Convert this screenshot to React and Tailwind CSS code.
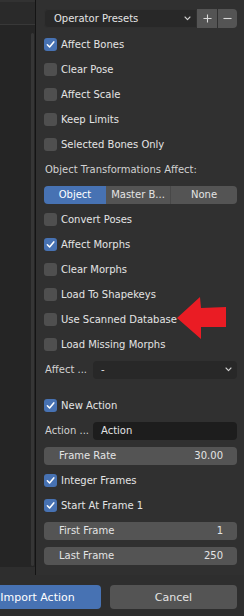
import React from 'react';

const Check = () => (
  <svg viewBox="0 0 12 12" className="w-[11px] h-[11px]">
    <path d="M2.6 6.3 L5 8.7 L9.6 3.2" fill="none" stroke="white" strokeWidth="1.7" strokeLinecap="round" strokeLinejoin="round" />
  </svg>
);

const Chevron = () => (
  <svg viewBox="0 0 8 6" className="w-[7px] h-[5px]">
    <path d="M1 1.2 L4 4.3 L7 1.2" fill="none" stroke="#d0d0d0" strokeWidth="1.3" strokeLinecap="round" strokeLinejoin="round" />
  </svg>
);

function CheckRow({ label, checked }) {
  return (
    <div className="h-[25px] flex items-center">
      <div className={`w-[13px] h-[13px] rounded-[3px] flex items-center justify-center ${checked ? 'bg-[#4772b3]' : 'bg-[#4f4f4f]'}`}>
        {checked && <Check />}
      </div>
      <span className="ml-[4px]">{label}</span>
    </div>
  );
}

function NumberField({ label, value }) {
  return (
    <div className="h-[25px] flex items-center">
      <div className="w-full h-[18px] rounded-[4px] bg-[#545454] flex items-center justify-between pl-[15px] pr-[14px]">
        <span>{label}</span>
        <span>{value}</span>
      </div>
    </div>
  );
}

export default function App() {
  return (
    <div
      className="relative w-[244px] h-[616px] overflow-hidden bg-[#2e2e2e] text-[#e4e4e4] text-[10px] leading-none"
      style={{ fontFamily: '"DejaVu Sans", sans-serif' }}
    >
      <div className="flex h-[575px]">
        {/* file list side */}
        <div className="w-[35px] flex flex-col">
          <div className="h-[24px] bg-[#2a2a2a] border-t-[2px] border-[#323232]" />
          <div className="h-[543px] bg-[#252525] border-t border-[#383838] flex">
            <div className="flex-1" />
            <div className="w-[3px] mt-[8px] mb-[1px] mr-[1px] rounded-full bg-[#363636]" />
          </div>
        </div>
        <div className="w-[1px] bg-[#141414]" />

        {/* operator panel */}
        <div className="flex-1 bg-[#303030] pl-[8px] pr-[7px]">
          <div className="mt-[9px] h-[19px] flex">
            <div className="flex-1 bg-[#282828] rounded-l-[4px] flex items-center justify-between pl-[9px] pr-[5px] border border-[#2f2f2f]">
              <span>Operator Presets</span>
              <Chevron />
            </div>
            <div className="w-[20px] bg-[#545454] flex items-center justify-center">
              <svg viewBox="0 0 10 10" className="w-[9px] h-[9px]">
                <path d="M5 0.5 V9.5 M0.5 5 H9.5" stroke="#d8d8d8" strokeWidth="1.2" />
              </svg>
            </div>
            <div className="w-[19px] ml-[1px] bg-[#545454] rounded-r-[4px] flex items-center justify-center">
              <svg viewBox="0 0 10 10" className="w-[9px] h-[9px]">
                <path d="M0.5 5 H9.5" stroke="#d8d8d8" strokeWidth="1.2" />
              </svg>
            </div>
          </div>

          <div className="mt-[4px]">
            <CheckRow label="Affect Bones" checked />
            <CheckRow label="Clear Pose" />
            <CheckRow label="Affect Scale" />
            <CheckRow label="Keep Limits" />
            <CheckRow label="Selected Bones Only" />
            <div className="h-[25px] flex items-center pl-[1px] text-[#d2d2d2]">Object Transformations Affect:</div>
            <div className="h-[25px] flex items-center">
              <div className="w-full h-[18px] flex rounded-[4px] overflow-hidden">
                <div className="w-[62px] bg-[#4772b3] text-white flex items-center justify-center">Object</div>
                <div className="w-[65px] bg-[#545454] border-r border-[#484848] flex items-center justify-center">Master B...</div>
                <div className="flex-1 bg-[#545454] flex items-center justify-center">None</div>
              </div>
            </div>
            <CheckRow label="Convert Poses" />
            <CheckRow label="Affect Morphs" checked />
            <CheckRow label="Clear Morphs" />
            <CheckRow label="Load To Shapekeys" />
            <CheckRow label="Use Scanned Database" />
            <CheckRow label="Load Missing Morphs" />
            <div className="h-[25px] flex items-center">
              <span className="w-[49px] pl-[1px] text-[#d2d2d2]">Affect ...</span>
              <div className="flex-1 h-[18px] bg-[#282828] rounded-[4px] flex items-center justify-between pl-[8px] pr-[5px]">
                <span>-</span>
                <Chevron />
              </div>
            </div>
          </div>

          <div className="mt-[11px]">
            <CheckRow label="New Action" checked />
            <div className="h-[25px] flex items-center">
              <span className="w-[49px] pl-[1px] text-[#d2d2d2]">Action ...</span>
              <div className="flex-1 h-[18px] bg-[#1d1d1d] rounded-[4px] flex items-center pl-[8px]">Action</div>
            </div>
            <NumberField label="Frame Rate" value="30.00" />
            <CheckRow label="Integer Frames" checked />
            <CheckRow label="Start At Frame 1" checked />
            <NumberField label="First Frame" value="1" />
            <NumberField label="Last Frame" value="250" />
          </div>
        </div>
      </div>

      {/* dialog buttons */}
      <div className="mt-[10px] flex text-[11px]">
        <div className="ml-[-26px] w-[127px] h-[24px] rounded-[4px] bg-[#4772b3] text-white flex items-center justify-center">Import Action</div>
        <div className="ml-[9px] w-[127px] h-[24px] rounded-[4px] bg-[#545454] flex items-center justify-center">Cancel</div>
      </div>

      {/* red annotation arrow */}
      <svg viewBox="0 0 50 42" className="absolute left-[177px] top-[297px] w-[50px] h-[42px]">
        <polygon points="0,21 23,0 24,11 49,10 49,30 24,30 24,42" fill="#ea1c24" />
      </svg>
    </div>
  );
}
